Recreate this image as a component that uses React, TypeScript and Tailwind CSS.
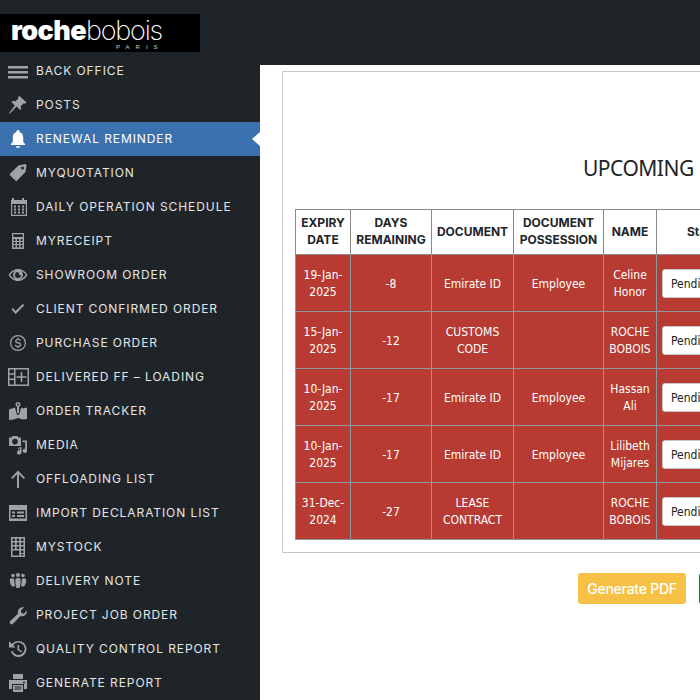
import React from "react";

const Svg = ({ children, w = 20, h = 20 }: { children: React.ReactNode; w?: number; h?: number }) => (
  <svg width={w} height={h} viewBox="0 0 20 20" fill="#a0a3a6" stroke="none">{children}</svg>
);

const icons: Record<string, React.ReactNode> = {
  menu: <Svg><path d="M0 5h20v2.500H0zM0 10h20v2.500H0zM0 15h20v2.500H0z" /></Svg>,
  pin: <Svg><path d="M11.500 1 18.500 7.500l-1.300 1.200-1.300-.5-3.200 3.100c.6 1.400.5 2.800-.3 3.900L8.600 11.400 2 18.500l-1-.2 5.800-7.900-3.500-3.600c1.200-.8 2.600-.9 4-.3l3.100-3.100-.4-1.300z" /></Svg>,
  bell: <Svg><path fill="#fff" d="M10 1c.9 0 1.500.6 1.500 1.500v.5c2.400.7 3.700 2.800 3.700 5.400v3.300c0 1.400.8 2.300 1.800 3v1.300H3v-1.300c1-.7 1.800-1.600 1.800-3V8.400C4.800 5.800 6.100 3.700 8.500 3v-.5C8.500 1.600 9.100 1 10 1zM7.800 17.300h4.400c0 1-1 1.700-2.200 1.700s-2.200-.7-2.200-1.700z" /></Svg>,
  tag: <Svg><path fillRule="evenodd" d="M10.500 2.500 17 1c.7 0 1.500.8 1.500 1.500l-1 6.500L9 17.800c-.4.400-1 .4-1.400 0l-5.600-5.600c-.4-.4-.4-1 0-1.400zM14.500 3.500a1.500 1.500 0 1 0 0 3 1.500 1.500 0 0 0 0-3z" /></Svg>,
  calendar: <Svg><path fillRule="evenodd" d="M4 1h2v2h8V1h2v2h3v16H3V3h1zM4.200 7v10.800h13.600V7zM6 8.500h2v2H6zM10 8.500h2v2h-2zM14 8.500h2v2h-2zM6 11.500h2v2H6zM10 11.500h2v2h-2zM14 11.500h2v2h-2zM6 14.500h2v2H6zM10 14.500h2v2h-2zM14 14.500h2v2h-2z" /></Svg>,
  calc: <Svg><path fillRule="evenodd" d="M4 2h12v16H4zM5.200 3.200v2.800h9.600V3.200zM5.500 8v2h2V8zM9 8v2h2V8zM12.500 8v2h2V8zM5.500 11v2h2v-2zM9 11v2h2v-2zM12.500 11v2h2v-2zM5.500 14v2.500h2V14zM9 14v2.500h2V14zM12.500 14v2.500h2V14z" /></Svg>,
  eye: <Svg><path fillRule="evenodd" d="M10 4c4 0 7.500 2.500 9.500 6-2 3.500-5.500 6-9.500 6s-7.500-2.500-9.500-6C2.500 6.500 6 4 10 4zM2.200 10c1.500 2.100 3.300 3.500 5.200 4.200A5 5 0 0 1 5 10a5 5 0 0 1 2.400-4.200C5.500 6.500 3.700 7.900 2.200 10zm10.400-4.200A5 5 0 0 1 15 10a5 5 0 0 1-2.400 4.200c1.900-.7 3.700-2.100 5.200-4.200-1.500-2.100-3.300-3.500-5.200-4.200zM10 7a3 3 0 1 0 3 3c-1 .5-2.600-.3-2.300-1.700.1-.5 0-1.100-.7-1.300z" /></Svg>,
  check: <Svg><path d="M3.500 10.500 4.800 9l2.900 3L14.800 5 16.300 6.300 7.700 15z" /></Svg>,
  dollar: <Svg><path fillRule="evenodd" d="M10 2a8 8 0 1 1 0 16 8 8 0 0 1 0-16zm0 1.200a6.800 6.800 0 1 0 0 13.600 6.800 6.800 0 0 0 0-13.600z" /><path d="M9.400 4.700h1.200v1.200c1.200.1 2.100.7 2.400 1.800l-1.200.3c-.2-.7-.8-1-1.700-1-1 0-1.600.4-1.600 1.100 0 .6.500.9 1.800 1.200 1.800.4 2.900 1 2.900 2.400 0 1.300-1 2.100-2.600 2.300v1.300H9.400V14c-1.400-.1-2.400-.9-2.600-2.100l1.200-.2c.2.800.9 1.300 2 1.300 1.100 0 1.800-.5 1.800-1.200s-.6-1-1.900-1.300c-1.800-.4-2.800-1-2.800-2.300 0-1.200.9-2 2.300-2.200z" /></Svg>,
  table: (
    <svg width="21" height="18" viewBox="0 0 21 18" fill="#a0a3a6">
      <path fillRule="evenodd" d="M0 0h21v18H0zM1.500 1.500v3.800h4.500V1.500zM7.500 1.500v15h12V1.500zM1.500 6.800v3.600h4.500V6.800zM1.500 12v4.500h4.500V12z" />
      <path d="M12.700 4h1.600v4.200h4.200v1.600h-4.200V14h-1.600V9.800H8.500V8.200h4.200z" />
    </svg>
  ),
  map: <Svg><path fillRule="evenodd" d="M10 1a2.500 2.500 0 0 1 1 4.800V12h-2V5.800A2.500 2.500 0 0 1 10 1zm0 1.500a1 1 0 1 0 0 2 1 1 0 0 0 0-2z" /><path d="M1 8.500 7 6.500 8.500 12.500 10 14.500 11.500 12.500 13 6.500l2 1 4-1V18l-4.500.5L10 17l-4.500 1.500L1 19z" /></Svg>,
  media: <Svg><path fillRule="evenodd" d="M4.500 1h5l1 1.500H13V11H1V2.500h2.500zM7 3.800a2.800 2.800 0 1 0 0 5.600 2.800 2.800 0 0 0 0-5.600z" /><path d="M14.500 5.500H19v10.300a2.200 2.200 0 1 1-1.800-2.100V7.200h-2.700zM9.500 13l4 -1v5.300a2.200 2.200 0 1 1-1.500-2v-2.100l-1.500.4v1.400z" /></Svg>,
  up: <Svg><path d="M10 1.500 17 8.700l-1.400 1.300-4.600-4.700V19H9V5.300L4.400 10 3 8.700z" /></Svg>,
  form: <Svg><path fillRule="evenodd" d="M1 2h18v16H1zM2.500 7v8.500h15V7zM4 8.500h3v2H4zM9 8.500h7v2H9zM4 12h3v2H4zM9 12h7v2H9z" /></Svg>,
  building: <Svg><path fillRule="evenodd" d="M3 0h14v20H3zM4.500 1.500v2.500h2.500V1.500zM8.700 1.500v2.500h2.600V1.500zM13 1.500v2.500h2.500V1.500zM4.500 5.500V8h2.500V5.500zM8.700 5.500V8h2.600V5.500zM13 5.500V8h2.500V5.500zM4.500 9.500V12h2.500V9.500zM8.700 9.500V12h2.600V9.500zM13 9.500V12h2.500V9.500zM4.500 13.500v5h6.800v-5zM13 13.500V16h2.500v-2.500zM13 17v1.500h2.500V17z" /></Svg>,
  people: <Svg><circle cx="5" cy="4.500" r="1.800" /><circle cx="10" cy="4" r="2" /><circle cx="15" cy="4.500" r="1.800" /><path d="M2 8c1-1 3-1 4 0 .5 3 .5 5 1 7-1.500 1-3 .6-3.600-.6C2 12.500 1.500 10 2 8zM18 8c-1-1-3-1-4 0-.5 3-.5 5-1 7 1.500 1 3 .6 3.600-.6C18 12.500 18.500 10 18 8zM7.500 7.500c1.500-.7 3.500-.7 5 0 .3 3.500 0 6.500-1 9.500h-3c-1-3-1.300-6-1-9.500z" /></Svg>,
  wrench: <Svg><path d="M18.500 5.200c.6 1.800.1 3.800-1.400 5-1.400 1.100-3.200 1.400-4.700.8L5 18.700c-.8.700-2 .7-2.700 0-.8-.8-.8-2 0-2.800l7.800-7.400c-.6-1.600-.2-3.400 1-4.800 1.300-1.400 3.200-1.900 5-1.300l-3.300 3.100.8 2.500 2.500.7z" /></Svg>,
  history: <Svg><path fillRule="evenodd" d="M10.500 2a8 8 0 1 1-7.600 10.500l1.600-.5A6.300 6.300 0 1 0 5.200 6.200L7.500 8.500H1V2l3 3a8 8 0 0 1 6.500-3z" /><path d="M9.500 6h1.600v4.200l3 2-.9 1.300-3.700-2.500z" /></Svg>,
  print: <Svg><path fillRule="evenodd" d="M5 1h10v5H5zM1 7h18v9h-3v-5H4v5H1zM16 8.500a1 1 0 1 0 0 2 1 1 0 0 0 0-2zM5 12h10v7H5zM6.500 13.500v1h7v-1zM6.500 15.500v1h7v-1z" /></Svg>,
};

const menu: [string, string][] = [
  ["menu", "BACK OFFICE"],
  ["pin", "POSTS"],
  ["bell", "RENEWAL REMINDER"],
  ["tag", "MYQUOTATION"],
  ["calendar", "DAILY OPERATION SCHEDULE"],
  ["calc", "MYRECEIPT"],
  ["eye", "SHOWROOM ORDER"],
  ["check", "CLIENT CONFIRMED ORDER"],
  ["dollar", "PURCHASE ORDER"],
  ["table", "DELIVERED FF – LOADING"],
  ["map", "ORDER TRACKER"],
  ["media", "MEDIA"],
  ["up", "OFFLOADING LIST"],
  ["form", "IMPORT DECLARATION LIST"],
  ["building", "MYSTOCK"],
  ["people", "DELIVERY NOTE"],
  ["wrench", "PROJECT JOB ORDER"],
  ["history", "QUALITY CONTROL REPORT"],
  ["print", "GENERATE REPORT"],
];

const rows: [React.ReactNode, string, React.ReactNode, string, React.ReactNode][] = [
  [<>19-Jan-<br />2025</>, "-8", "Emirate ID", "Employee", <>Celine<br />Honor</>],
  [<>15-Jan-<br />2025</>, "-12", <>CUSTOMS<br />CODE</>, "", <>ROCHE<br />BOBOIS</>],
  [<>10-Jan-<br />2025</>, "-17", "Emirate ID", "Employee", <>Hassan<br />Ali</>],
  [<>10-Jan-<br />2025</>, "-17", "Emirate ID", "Employee", <>Lilibeth<br />Mijares</>],
  [<>31-Dec-<br />2024</>, "-27", <>LEASE<br />CONTRACT</>, "", <>ROCHE<br />BOBOIS</>],
];

const thClass = "border border-[#8a8a8a] px-1 pb-[2px] text-center align-middle font-['Inter',sans-serif] text-[12px] font-bold leading-[17px] text-[#212529]";
const tdClass = "border border-[#8d9a9c] px-1 pt-[2px] text-center align-middle leading-[17px]";

export default function App() {
  return (
    <div className="flex h-[700px] w-[700px] overflow-hidden bg-white font-['Inter',sans-serif]">
      <aside className="h-full w-[260px] shrink-0 bg-[#1f2429] pt-[14px]">
        <div className="mb-[2px] flex h-[38px] w-[200px] flex-col justify-center bg-black pl-[11px] text-white">
          <div className="h-[27px] text-[27px] leading-[27px] tracking-[-0.6px]">
            <span className="font-black">roche</span>
            <span className="font-extralight tracking-[-1.2px]">bobois</span>
          </div>
          <div className="pl-[105px] font-['Liberation_Sans',sans-serif] text-[6px] leading-[6px] tracking-[6px] text-[#d0d0d0]">PARIS</div>
        </div>
        <nav>
          {menu.map(([icon, label], i) => {
            const active = i === 2;
            return (
              <div key={label} className={`relative flex h-[34px] items-center ${active ? "bg-[#3a71ae] text-white" : "text-[#e4e5e6]"}`}>
                <span className="flex w-[36px] shrink-0 justify-center">{icons[icon]}</span>
                <span className="text-[12px] font-normal leading-none tracking-[0.92px]">{label}</span>
                {active && (
                  <span className="absolute right-0 top-[10px] h-0 w-0 border-y-[7px] border-r-[8px] border-y-transparent border-r-white" />
                )}
              </div>
            );
          })}
        </nav>
      </aside>
      <div className="flex min-w-0 flex-1 flex-col overflow-hidden">
        <div className="h-[65px] shrink-0 bg-[#1f2429]" />
        <div className="w-[1000px] pl-[22px] pt-[6px]">
          <div className="h-[482px] border border-[#c6c6ca] pl-[12px]">
            <h1 className="mt-[71px] h-[66px] pl-[288px] font-['Noto_Sans',sans-serif] text-[21px] font-normal leading-[50px] tracking-[-0.5px] text-[#212529]">UPCOMING</h1>
            <table className="w-[700px] table-fixed border-collapse">
              <colgroup>
                <col className="w-[55px]" />
                <col className="w-[81px]" />
                <col className="w-[82px]" />
                <col className="w-[90px]" />
                <col className="w-[53px]" />
                <col className="w-[339px]" />
              </colgroup>
              <thead>
                <tr className="h-[45px]">
                  <th className={thClass}>EXPIRY<br />DATE</th>
                  <th className={thClass}>DAYS<br />REMAINING</th>
                  <th className={thClass}>DOCUMENT</th>
                  <th className={thClass}>DOCUMENT<br />POSSESSION</th>
                  <th className={thClass}>NAME</th>
                  <th className={thClass}><span className="block pl-[26px] text-left">Status</span></th>
                </tr>
              </thead>
              <tbody className="bg-[#b73b32] font-['DejaVu_Sans',sans-serif] text-[12px] font-stretch-condensed text-white">
                {rows.map((r, i) => (
                  <tr key={i} className="h-[57px]">
                    <td className={tdClass}>{r[0]}</td>
                    <td className={tdClass}>{r[1]}</td>
                    <td className={tdClass}>{r[2]}</td>
                    <td className={tdClass}>{r[3]}</td>
                    <td className={tdClass + " !px-0"}>{r[4]}</td>
                    <td className={tdClass + " !px-[5px] !pt-0"}>
                      <div className="flex h-[29px] w-[120px] items-center rounded-[3px] border border-[#c8c8c8] bg-white pl-[8px] pt-[2px] text-[#222]">Pending</div>
                    </td>
                  </tr>
                ))}
              </tbody>
            </table>
          </div>
          <div className="flex gap-[13px] pl-[296px] pt-[20px]">
            <button className="h-[31px] w-[108px] rounded-[3px] bg-[#f6c144] text-center text-[14px] font-medium tracking-[-0.25px] text-white">Generate PDF</button>
            <button className="h-[31px] w-[108px] rounded-[3px] bg-[#2f6f4f] text-center text-[14px] text-white">Export</button>
          </div>
        </div>
      </div>
    </div>
  );
}
